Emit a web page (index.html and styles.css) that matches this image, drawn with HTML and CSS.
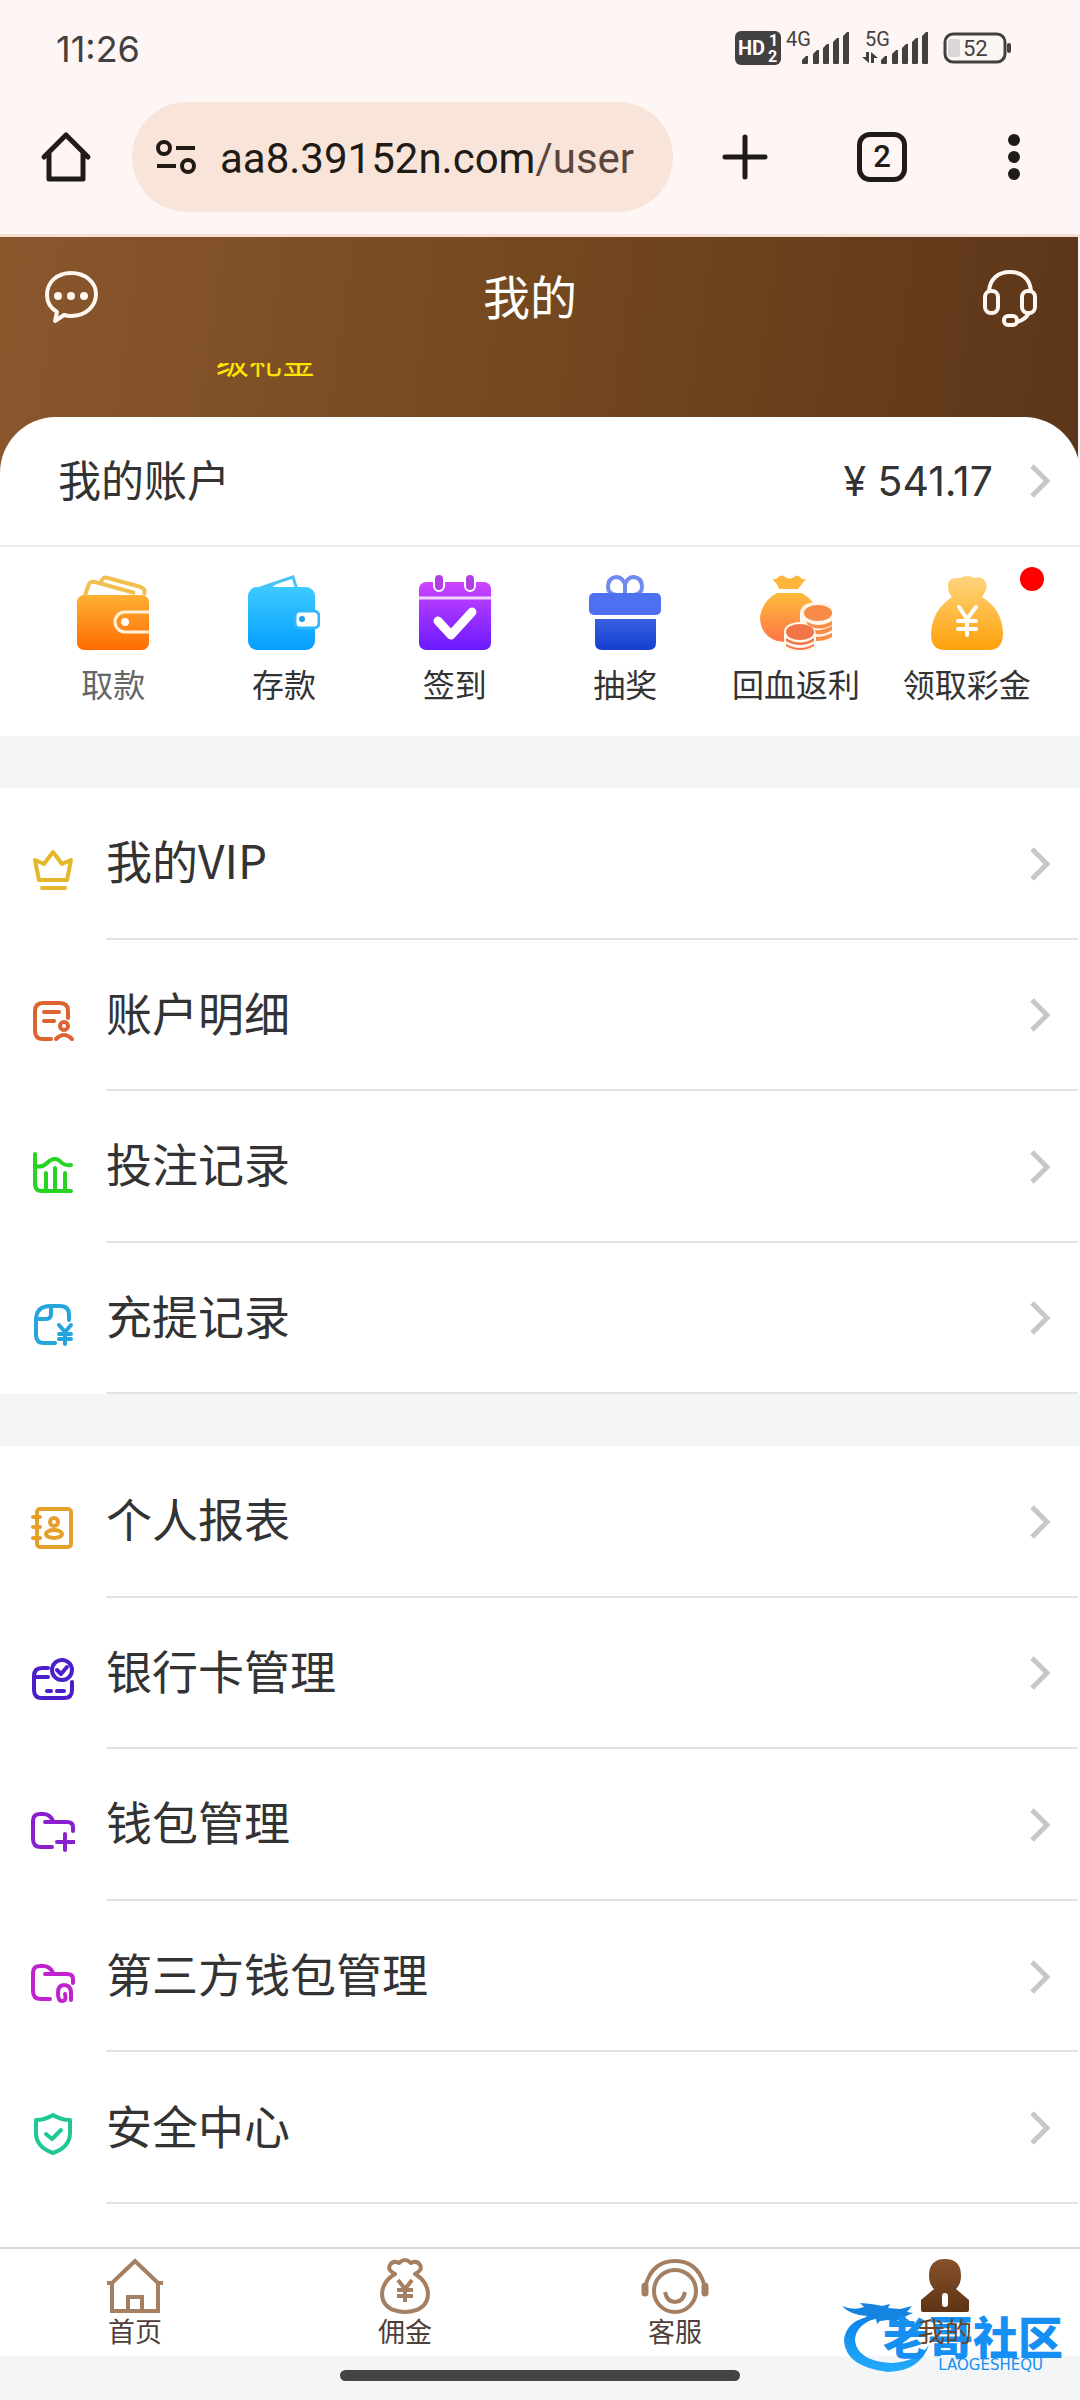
FILE: index.html
```html
<!DOCTYPE html>
<html lang="zh-CN">
<head>
<meta charset="utf-8">
<meta name="viewport" content="width=device-width, initial-scale=1">
<title>我的</title>
<link rel="stylesheet" href="styles.css">
</head>
<body>
<div class="browser">
  <div class="status">
    <time class="clock">11:26</time>
    <svg class="status-icons" width="280" height="36" viewBox="0 0 280 36" fill="#434040">
      <rect x="1" y="0" width="46" height="34" rx="6"/>
      <g font-family="Roboto, sans-serif">
        <text x="4" y="24" font-size="20" font-weight="700" fill="#fff">HD</text>
        <text x="35" y="15" font-size="16" font-weight="700" fill="#fff">1</text>
        <text x="34" y="31" font-size="16" font-weight="700" fill="#fff">2</text>
        <text x="52" y="15" font-size="20">4G</text>
        <text x="131" y="15" font-size="20">5G</text>
      </g>
      <g id="bars"><path d="M68 32V29l4-4h2v7a1 1 0 0 1-1 1h-4a1 1 0 0 1-1-1zM79 32V23l4-4h2v13a1 1 0 0 1-1 1h-4a1 1 0 0 1-1-1zM89 32V17l4-4h2v19a1 1 0 0 1-1 1h-4a1 1 0 0 1-1-1zM99 32V11l4-4h2v25a1 1 0 0 1-1 1h-4a1 1 0 0 1-1-1zM109 32V5l4-4h2v31a1 1 0 0 1-1 1h-4a1 1 0 0 1-1-1z"/></g>
      <use href="#bars" x="79"/>
      <path d="M132 21h3v11l-7-6h4zM137 32v-11l7 6h-4v5z"/>
      <rect x="214" y="8" width="12" height="18" rx="2" fill="#dcd6d6"/>
      <rect x="211" y="3" width="60" height="28" rx="8" fill="none" stroke="#434040" stroke-width="3"/>
      <rect x="273" y="12" width="4" height="10" rx="2"/>
      <text x="229" y="25" font-family="Roboto, sans-serif" font-size="22">52</text>
    </svg>
  </div>
  <div class="toolbar">
    <button class="tool" aria-label="主页"><svg width="52" height="52" viewBox="0 0 52 52" fill="none" stroke="#211b16" stroke-width="5" stroke-linejoin="round" stroke-linecap="round"><path d="M4 26L26 4l22 22M9 22v26h34V22"/></svg></button>
    <div class="address">
      <svg width="44" height="36" viewBox="0 0 44 36" fill="none" stroke="#211b16"><circle cx="10" cy="9" r="6" stroke-width="4"/><circle cx="34" cy="27" r="6" stroke-width="4"/><path d="M22 9h19M3 27h19" stroke-width="4"/></svg>
      <span class="url">aa8.39152n.com<span class="path">/user</span></span>
    </div>
    <button class="tool" aria-label="新标签页"><svg width="48" height="48" viewBox="0 0 48 48" stroke="#211b16" stroke-width="5" stroke-linecap="round"><path d="M24 4v40M4 24h40"/></svg></button>
    <button class="tool tabs-count" aria-label="2 个标签页">2</button>
    <button class="tool" aria-label="菜单"><svg width="12" height="46" viewBox="0 0 12 46" fill="#211b16"><circle cx="6" cy="6" r="6"/><circle cx="6" cy="23" r="6"/><circle cx="6" cy="40" r="6"/></svg></button>
  </div>
</div>

<header class="hero">
  <div class="titlebar">
    <a href="#" aria-label="消息"><svg width="54" height="56" viewBox="0 0 54 56" fill="none" stroke="#fff7f0" stroke-width="4" stroke-linejoin="round"><path d="M13 42Q3 36 3 25C3 12 13 3 27 3s25 9 25 21-10 22-25 22q-4 0-7-1l-9 6z"/><g fill="#fff7f0" stroke="none"><circle cx="14" cy="26" r="4"/><circle cx="27" cy="26" r="4"/><circle cx="40" cy="26" r="4"/></g></svg></a>
    <h1>我的</h1>
    <a href="#" aria-label="客服"><svg width="56" height="58" viewBox="0 0 56 58" fill="none" stroke="#fff7f0" stroke-width="4"><path d="M7 22C8 10 16 3 28 3s20 7 21 19M47 44q-4 7-12 9"/><rect x="3" y="22" width="13" height="22" rx="6"/><rect x="40" y="22" width="13" height="22" rx="6"/><rect x="22" y="47" width="13" height="9" rx="4"/></svg></a>
  </div>
  <div class="notice"><p>级礼金</p></div>
</header>

<main class="page">
  <a class="account" href="#">
    <span class="label">我的账户</span>
    <span class="amount">¥ 541.17</span>
    <svg class="chevron" width="22" height="34" viewBox="0 0 22 34"><path d="M3 2l15 15L3 32"/></svg>
  </a>
  <nav class="quick">
    <a class="muted" href="#">
      <svg width="72" height="76" viewBox="0 0 72 76"><defs><linearGradient id="g1" x2="0" y2="1"><stop stop-color="#ffb036"/><stop offset="1" stop-color="#ff6c00"/></linearGradient></defs><path d="M8 20l4-11q2-3 6-2l40 11M24 7q2-6 7-4l33 9q5 2 3 8" fill="none" stroke="#f2c050" stroke-width="4"/><rect y="20" width="72" height="55" rx="7" fill="url(#g1)"/><path d="M72 37H48a10 10 0 0 0 0 20h24" fill="none" stroke="#fff2d8" stroke-width="3"/><circle cx="48" cy="47" r="4" fill="#fff"/></svg>
      取款</a>
    <a href="#">
      <svg width="72" height="76" viewBox="0 0 72 76"><defs><linearGradient id="g2" x2="0" y2="1"><stop stop-color="#3dcaff"/><stop offset="1" stop-color="#049eff"/></linearGradient></defs><path d="M6 15L45 2l4 13z" fill="#fff" stroke="#48c4f3" stroke-width="3"/><path d="M4 15L33 5l-12 10z" fill="#48c4f3"/><rect y="12" width="67" height="63" rx="9" fill="url(#g2)"/><rect x="47" y="36" width="24" height="17" rx="5" fill="#fff" stroke="#30b8fb" stroke-width="3"/><circle cx="54" cy="44" r="3" fill="#1b9fe8"/></svg>
      存款</a>
    <a href="#">
      <svg width="72" height="76" viewBox="0 0 72 76"><defs><linearGradient id="g3" x2="0" y2="1"><stop stop-color="#cd45ff"/><stop offset="1" stop-color="#681aff"/></linearGradient></defs><rect y="7" width="72" height="68" rx="7" fill="url(#g3)"/><path d="M0 23h72" stroke="#f4d4ff" stroke-width="3"/><g fill="#b13fe4" stroke="#fff" stroke-width="2"><rect x="15" y="-1" width="10" height="17" rx="5"/><rect x="46" y="-1" width="10" height="17" rx="5"/></g><path d="M19 46l13 14 21-23" fill="none" stroke="#fff" stroke-width="9" stroke-linecap="round" stroke-linejoin="round"/></svg>
      签到</a>
    <a href="#">
      <svg width="72" height="76" viewBox="0 0 72 76"><defs><linearGradient id="g4" x2="0" y2="1"><stop stop-color="#3860e2"/><stop offset="1" stop-color="#143fd0"/></linearGradient></defs><g fill="none" stroke="#708bee" stroke-width="4"><path d="M36 18V10q-2-8-9-8-8 1-8 10 0 7 8 8M36 10q2-8 9-8 8 1 8 10 0 7-8 8"/></g><rect y="18" width="72" height="22" rx="5" fill="#4c70ef"/><path d="M6 44h61v24q0 7-7 7H13q-7 0-7-7z" fill="url(#g4)"/></svg>
      抽奖</a>
    <a href="#">
      <svg width="72" height="76" viewBox="0 0 72 76"><defs><linearGradient id="g5" x2="0" y2="1"><stop stop-color="#ffbb3c"/><stop offset="1" stop-color="#ff7448"/></linearGradient></defs><path d="M12 4q5 1 6-2 5-3 7 0 4 3 9 0 3-3 6 0 2 3 6 2-4 5-8 10H19q-2-6-7-10z" fill="#fdb53d"/><path d="M17 18h25q14 8 18 26 1 18-16 23-9 2-27-1Q0 60 0 42q2-16 17-24z" fill="url(#g5)"/><path d="M40 37q2-10 18-10t17 11v28H56v10H24V56q1-8 16-9z" fill="#fff6ea"/><g fill="#f78b47"><ellipse cx="58" cy="38" rx="14" ry="8"/><path d="M46 46q12 8 26 0v4q-13 7-24 0zM55 55q8 1 17-4v4q-7 5-16 4zM56 62q8 0 16-4v4q-7 4-16 4z"/></g><g fill="#f17548"><ellipse cx="40" cy="57" rx="14" ry="8"/><path d="M26 63q14 9 28 0v3q-14 8-28 0zM26 69q14 8 28 0v2q-14 8-28 0z"/></g></svg>
      回血返利</a>
    <a href="#">
      <svg width="72" height="76" viewBox="0 0 72 76"><defs><linearGradient id="g6" x2="0" y2="1"><stop stop-color="#fed57c"/><stop offset="1" stop-color="#fea10b"/></linearGradient></defs><path d="M21 22q-4-5-4-11 0-8 8-8 3 0 4 0 7-4 15 0 4-2 8 1 5 4 3 11-2 4-4 7 20 12 21 36 0 17-14 17H14Q0 75 0 59q1-24 21-37z" fill="url(#g6)"/><path d="M28 32l8 12 9-12M36 44v16M27 46h18M27 54h18" fill="none" stroke="#fff" stroke-width="4" stroke-linecap="round"/></svg>
      领取彩金<i class="dot"></i></a>
  </nav>

  <ul class="menu four">
    <li><a href="#"><svg class="ico gold" viewBox="0 0 44 44"><path d="M4 12l9 4 9-12 9 12 9-4-4 20H8zM11 40h23"/></svg><span>我的VIP</span><svg class="chevron" width="22" height="34" viewBox="0 0 22 34"><path d="M3 2l15 15L3 32"/></svg></a></li>
    <li><a href="#"><svg class="ico rust" viewBox="0 0 44 44"><path d="M37 19v-7q0-8-8-8H12q-8 0-8 8v20q0 8 8 8h8M13 13h15M13 22h10"/><circle cx="33" cy="27" r="4"/><path d="M25 40q8-8 16 0"/></svg><span>账户明细</span><svg class="chevron" width="22" height="34" viewBox="0 0 22 34"><path d="M3 2l15 15L3 32"/></svg></a></li>
    <li><a href="#"><svg class="ico green" viewBox="0 0 44 44"><path d="M4 3v30q0 7 7 7h29M4 15q7 2 12-3 8-8 15 0 4 3 9 2M15 22v17M24 17v22M34 22v17"/></svg><span>投注记录</span><svg class="chevron" width="22" height="34" viewBox="0 0 22 34"><path d="M3 2l15 15L3 32"/></svg></a></li>
    <li><a href="#"><svg class="ico blue" viewBox="0 0 44 44"><path d="M38 18v-5q0-9-9-9H18Q5 5 5 18v15q0 8 8 8h11M20 5v7q0 5-5 5H6M28 23l6 7 6-7M34 30v12M28 32h12M28 37h12"/></svg><span>充提记录</span><svg class="chevron" width="22" height="34" viewBox="0 0 22 34"><path d="M3 2l15 15L3 32"/></svg></a></li>
  </ul>
  <ul class="menu five">
    <li><a href="#"><svg class="ico amber" viewBox="0 0 44 44"><rect x="6" y="3" width="34" height="38" rx="3"/><path d="M2 11h7M2 21h7M2 32h7"/><circle cx="23" cy="16" r="4"/><ellipse cx="23" cy="28" rx="8" ry="4"/></svg><span>个人报表</span><svg class="chevron" width="22" height="34" viewBox="0 0 22 34"><path d="M3 2l15 15L3 32"/></svg></a></li>
    <li><a href="#"><svg class="ico indigo" viewBox="0 0 44 44"><circle cx="31" cy="13" r="10"/><path d="M26 13l4 4 6-7M17 11h-6q-8 0-8 8v14q0 8 8 8h22q8 0 8-8v-8M3 20h14M16 34h4M26 34h7"/></svg><span>银行卡管理</span><svg class="chevron" width="22" height="34" viewBox="0 0 22 34"><path d="M3 2l15 15L3 32"/></svg></a></li>
    <li><a href="#"><svg class="ico violet" viewBox="0 0 44 44"><path d="M42 22v-4q0-5-6-5H14M22 12q-3-7-10-7H9q-7 0-7 7v18q0 8 8 8h11M34 25v16M26 33h17"/></svg><span>钱包管理</span><svg class="chevron" width="22" height="34" viewBox="0 0 22 34"><path d="M3 2l15 15L3 32"/></svg></a></li>
    <li><a href="#"><svg class="ico magenta" viewBox="0 0 44 44"><path d="M42 22v-4q0-5-6-5H14M22 12q-3-7-10-7H9q-7 0-7 7v18q0 8 8 8h9M40 39v-7q0-8-7-8-6 0-6 8 0 8 4 8 5 0 3-7"/></svg><span>第三方钱包管理</span><svg class="chevron" width="22" height="34" viewBox="0 0 22 34"><path d="M3 2l15 15L3 32"/></svg></a></li>
    <li><a href="#"><svg class="ico teal" viewBox="0 0 44 44"><path d="M22 3q8 5 17 5v13q0 14-17 20Q5 35 5 21V8q9 0 17-5zM15 22l6 5 9-9"/></svg><span>安全中心</span><svg class="chevron" width="22" height="34" viewBox="0 0 22 34"><path d="M3 2l15 15L3 32"/></svg></a></li>
  </ul>
</main>

<footer class="bottom">
  <div class="watermark">
    <svg width="92" height="72" viewBox="0 0 92 72"><defs><linearGradient id="wm" x2="0" y2="1"><stop stop-color="#0b80e8"/><stop offset="1" stop-color="#23acfb"/></linearGradient></defs><path d="M36 12Q4 16 3 38q2 26 44 31 32-1 41-27-12 17-38 18Q17 58 14 38 14 20 40 14z" fill="url(#wm)"/><path d="M1 3q12 5 22 1L19 0q14 1 22 3l8-2-2 4 12 1 12-3-5 6 6 1-9 4 6 4-13-1 5 5-14-5-8 1-3 3-1-5-14 2 5-5Q9 12 1 3z" fill="#1583e0"/></svg>
    <div class="wm-text"><strong>老哥社区</strong><small>LAOGESHEQU</small></div>
  </div>
  <nav class="tabbar">
    <a href="#"><svg width="58" height="56" viewBox="0 0 58 56" fill="none" stroke="#a47f62" stroke-width="4"><path d="M1 25h5L29 3l23 22h5M6 24v29h46V24M22 53V39h14v14"/></svg><span>首页</span></a>
    <a href="#"><svg width="50" height="56" viewBox="0 0 50 56" fill="none" stroke="#a47f62" stroke-width="4" stroke-linejoin="round"><path d="M15 16q-8-4-5-9 3-5 9-2 6-6 12 0 6-3 9 2 3 5-5 9 12 7 13 19 0 18-23 19Q2 53 2 35q1-12 13-19z"/><path d="M18 22l7 9 7-9M25 31v13M17 32h16M17 38h16"/></svg><span>佣金</span></a>
    <a href="#"><svg width="68" height="56" viewBox="0 0 68 56" fill="none" stroke="#a47f62" stroke-width="4"><path d="M5 26Q12 3 34 3t29 23"/><ellipse cx="34" cy="33" rx="21" ry="21"/><path d="M24 34q2 10 10 10t10-10"/><path d="M4 28v7M64 28v7" stroke-width="7" stroke-linecap="round"/></svg><span>客服</span></a>
    <a class="active" href="#"><svg width="50" height="56" viewBox="0 0 50 56"><defs><linearGradient id="me" x2="0" y2="1"><stop stop-color="#85512a"/><stop offset="1" stop-color="#5e3415"/></linearGradient></defs><path d="M25 1q16 0 16 17 0 8-5 13l13 11v10q0 2-2 2H3q-2 0-2-2V42l13-11q-5-5-5-13Q9 1 25 1z" fill="url(#me)"/><rect x="22" y="35" width="6" height="14" rx="3" fill="#fff"/></svg><span>我的</span></a>
  </nav>
  <div class="gesture"></div>
</footer>
</body>
</html>
```
FILE: styles.css
```css
* { box-sizing: border-box; }
body {
  margin: 0;
  min-height: 100vh;
  display: flex;
  flex-direction: column;
  background: #f3f5f7;
  color: #333;
  font-family: "Noto Sans CJK SC", sans-serif;
}
a { color: inherit; text-decoration: none; }
button { border: 0; padding: 0; background: none; color: #211b16; }
svg { display: block; flex: none; }

.browser { background: #fef6f4; border-bottom: 3px solid #f8ddd2; }
.status {
  height: 102px;
  padding: 0 66px 4px 56px;
  display: flex;
  align-items: center;
  justify-content: space-between;
}
.status-icons { overflow: visible; }
.clock { font: 36px/40px Inter, sans-serif; color: #434040; }
.toolbar {
  display: flex;
  align-items: center;
  padding: 0 60px 22px 40px;
}
.tool { display: flex; flex: none; }
.address {
  flex: 1;
  height: 110px;
  margin: 0 48px 0 40px;
  padding: 0 22px;
  border-radius: 55px;
  background: #f9e4d9;
  display: flex;
  align-items: center;
  gap: 22px;
}
.url { font: 42px/50px Roboto, sans-serif; padding-top: 3px; color: #211b16; }
.path { color: #5a463d; }
.tabs-count {
  width: 50px;
  height: 50px;
  margin: 0 101px 0 88px;
  border: 5px solid #211b16;
  border-radius: 13px;
  align-items: center;
  justify-content: center;
  font: 500 31px/40px Roboto, sans-serif;
}

.hero {
  margin: 0 2px -56px 0;
  padding-bottom: 56px;
  background: linear-gradient(98deg, #8a572d, #74481f 50%, #5c361a);
}
.titlebar {
  height: 126px;
  padding: 0 40px 4px 44px;
  display: flex;
  align-items: center;
  justify-content: space-between;
}
.titlebar h1 {
  margin: 0 20px 0 0;
  padding-bottom: 6px;
  font-size: 47px;
  line-height: 60px;
  font-weight: 400;
  color: #fff;
}
.notice { height: 54px; overflow: hidden; padding-left: 216px; }
.notice p { margin: -19px 0 0; font-size: 33px; line-height: 33px; color: #ffe500; }

.page { flex: 1; background: #fff; border-radius: 56px 56px 0 0; position: relative; }
.chevron path { fill: none; stroke: #c8c8c8; stroke-width: 5; }
.account {
  height: 130px;
  padding: 0 29px 0 58px;
  border-bottom: 2px solid #eee;
  display: flex;
  align-items: center;
  font-size: 43px;
}
.account .label { padding-bottom: 6px; }
.amount { margin-left: auto; margin-right: 36px; font-family: Inter, sans-serif; font-size: 41px; }
.quick {
  display: grid;
  grid-template-columns: repeat(6, 1fr);
  padding: 28px 28px 30px;
}
.quick a {
  display: flex;
  flex-direction: column;
  align-items: center;
  gap: 9px;
  font-size: 32px;
  line-height: 46px;
  white-space: nowrap;
  position: relative;
}
.quick .muted { color: #666; }
.dot {
  position: absolute;
  top: -8px;
  right: 8px;
  width: 24px;
  height: 24px;
  border-radius: 50%;
  background: #f00;
}

.menu {
  list-style: none;
  margin: 0;
  padding: 0;
  border-top: 52px solid #f3f5f7;
  display: flex;
  flex-direction: column;
}
.menu.four { min-height: 658px; }
.menu.five { min-height: 810px; }
.menu li { flex: 1; display: flex; }
.menu a {
  flex: 1;
  padding-left: 31px;
  display: flex;
  align-items: center;
  gap: 31px;
  font-size: 46px;
  position: relative;
}
.menu span { flex: 1; padding-bottom: 9px; }
.menu .chevron { margin-right: 29px; }
.menu a::after {
  content: "";
  position: absolute;
  left: 106px;
  right: 2px;
  bottom: 0;
  height: 2px;
  background: #e3e3e4;
}
.ico {
  width: 44px;
  height: 44px;
  margin-top: 12px;
  fill: none;
  stroke-width: 4;
  stroke-linecap: round;
  stroke-linejoin: round;
}
.gold { stroke: #e5b72c; }
.rust { stroke: #dd6330; }
.green { stroke: #26d421; }
.blue { stroke: #26a5dc; }
.amber { stroke: #e5a02c; }
.indigo { stroke: #4a1ecb; }
.violet { stroke: #8a1fd0; }
.magenta { stroke: #c221d0; }
.teal { stroke: #1fc796; }

.bottom { position: relative; }
.tabbar {
  border-top: 2px solid #d9d9da;
  background: #fff;
  display: grid;
  grid-template-columns: repeat(4, 1fr);
  padding: 9px 0 8px;
}
.tabbar a {
  display: flex;
  flex-direction: column;
  align-items: center;
  font-size: 27px;
  line-height: 34px;
  color: #4e3f3c;
}
.tabbar .active { color: #6b4526; }
.tabbar .active > * { position: relative; z-index: 2; }
.gesture {
  width: 37%;
  height: 11px;
  margin: 14px auto 19px;
  border-radius: 6px;
  background: #444;
}
.watermark {
  position: absolute;
  z-index: 1;
  top: 56px;
  right: 17px;
  display: flex;
}
.wm-text {
  margin: 11px 0 0 -50px;
  display: flex;
  flex-direction: column;
  align-items: flex-end;
  color: #1590f2;
}
.wm-text strong { font-size: 45px; line-height: 44px; font-weight: 900; }
.wm-text small { font: 15px/15px "DejaVu Sans", sans-serif; padding-right: 20px; }
```
